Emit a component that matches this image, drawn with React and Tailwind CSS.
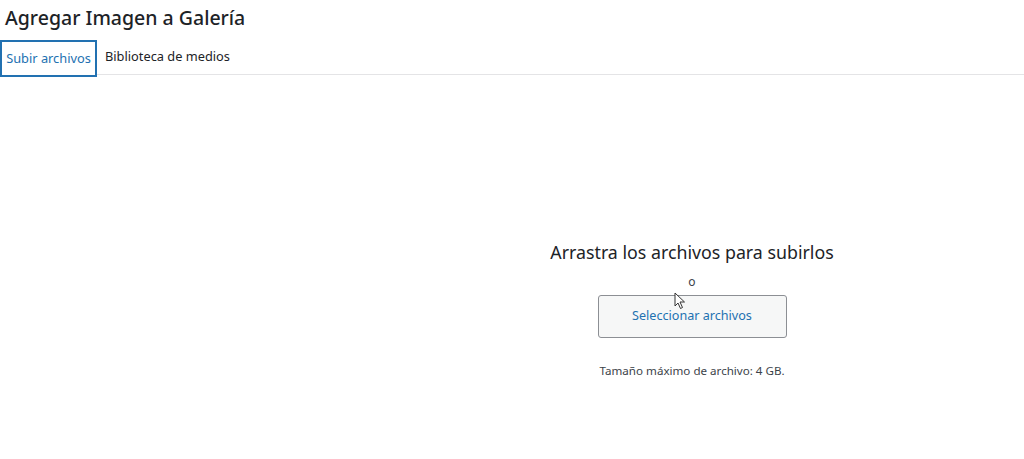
export default function App() {
  return (
    <div className="relative h-[459px] w-[1024px] overflow-hidden bg-white text-[#1d2327]" style={{ fontFamily: '"Noto Sans", "Open Sans", sans-serif' }}>
      {/* Header */}
      <h1 className="pl-[5px] pt-[4px] text-[19.5px] font-medium leading-[28px] text-[#1d2327]">Agregar Imagen a Galería</h1>

      {/* Tabs */}
      <div className="mt-[8px] flex h-[35px] items-stretch border-b border-[#e4e4e6]">
        <div className="-mb-[3px] flex w-[97px] items-center justify-center border-2 border-[#2271b1] bg-white text-[12.8px] text-[#2271b1]">
          Subir archivos
        </div>
        <div className="flex items-center pl-[8px] text-[12.8px] text-[#1d2327]">Biblioteca de medios</div>
      </div>

      {/* Upload area */}
      <div className="flex flex-col items-center pl-[360px] pt-[164px]">
        <p className="text-[17.8px] leading-[26px] text-[#1d2327]">Arrastra los archivos para subirlos</p>
        <p className="mt-[9px] text-[12px] leading-[16px] text-[#3c434a]">o</p>
        <button className="mt-[5px] h-[43px] w-[189px] rounded-[3px] border border-[#8c8f94] bg-[#f6f7f7] text-[12.6px] text-[#2271b1]">
          Seleccionar archivos
        </button>
        <p className="mt-[24px] text-[11.6px] text-[#3c434a]">Tamaño máximo de archivo: 4 GB.</p>
      </div>

      {/* Mouse cursor */}
      <svg className="absolute left-[674px] top-[292px]" width="12" height="18" viewBox="0 0 12 18">
        <path d="M1 1 L1 14 L4 11 L6.5 16.5 L8.5 15.5 L6 10 L10.5 10 Z" fill="white" stroke="#333" strokeWidth="1" strokeLinejoin="round" />
      </svg>
    </div>
  );
}
